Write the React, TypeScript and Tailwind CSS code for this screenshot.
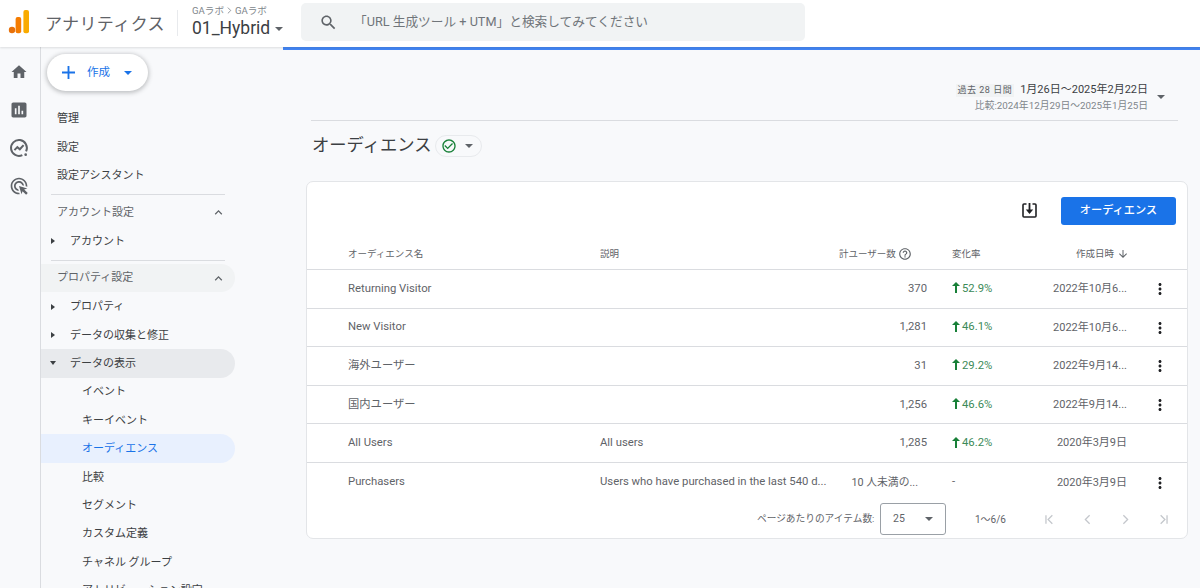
import React from 'react';

const font = "font-['Roboto','Noto_Sans_CJK_JP',sans-serif]";

const Caret = ({ className = '' }: { className?: string }) => (
  <svg viewBox="0 0 10 5" className={`w-[8px] h-[4px] fill-current ${className}`}>
    <path d="M0 0l5 5 5-5z" />
  </svg>
);

const Icon = ({ d, className = '' }: { d: string; className?: string }) => (
  <svg viewBox="0 0 24 24" className={`fill-current ${className}`}>
    <path d={d} />
  </svg>
);

const Line = ({ d }: { d: string }) => (
  <svg viewBox="0 0 24 24" className="w-[17px] h-[17px] fill-none stroke-current stroke-[1.8]">
    <path d={d} />
  </svg>
);

const icons = {
  home: 'M10 20v-6h4v6h5v-8h3L12 3 2 12h3v8z',
  chart: 'M19 3H5c-1.1 0-2 .9-2 2v14c0 1.1.9 2 2 2h14c1.1 0 2-.9 2-2V5c0-1.1-.9-2-2-2zM9 17H7v-7h2v7zm4 0h-2V7h2v10zm4 0h-2v-4h2v4z',
  click: 'M11.71,17.99C8.53,17.84,6,15.22,6,12c0-3.31,2.69-6,6-6c3.22,0,5.84,2.53,5.99,5.71l-2.1-0.63C15.48,9.31,13.89,8,12,8c-2.21,0-4,1.79-4,4c0,1.89,1.31,3.48,3.08,3.89L11.71,17.99z M22,12c0,0.3-0.01,0.6-0.04,0.9l-1.97-0.59C20,12.21,20,12.1,20,12c0-4.42-3.58-8-8-8s-8,3.58-8,8s3.58,8,8,8c0.1,0,0.21,0,0.31-0.01l0.59,1.97C12.6,21.99,12.3,22,12,22C6.48,22,2,17.52,2,12C2,6.48,6.48,2,12,2S22,6.48,22,12z M18.23,16.26L22,15l-10-3l3,10l1.26-3.77l4.27,4.27l1.98-1.98L18.23,16.26z',
  search: 'M15.5 14h-.79l-.28-.27C15.41 12.59 16 11.11 16 9.5 16 5.91 13.09 3 9.5 3S3 5.91 3 9.5 5.91 16 9.5 16c1.61 0 3.09-.59 4.23-1.57l.27.28v.79l5 4.99L20.49 19l-4.99-5zm-6 0C7.01 14 5 11.99 5 9.5S7.01 5 9.5 5 14 7.01 14 9.5 11.99 14 9.5 14z',
  more: 'M12 8c1.1 0 2-.9 2-2s-.9-2-2-2-2 .9-2 2 .9 2 2 2zm0 2c-1.1 0-2 .9-2 2s.9 2 2 2 2-.9 2-2-.9-2-2-2zm0 6c-1.1 0-2 .9-2 2s.9 2 2 2 2-.9 2-2-.9-2-2-2z',
  up: 'M7.41 15.41L12 10.83l4.59 4.58L18 14l-6-6-6 6z',
  help: 'M11 18h2v-2h-2v2zm1-16C6.48 2 2 6.48 2 12s4.48 10 10 10 10-4.48 10-10S17.52 2 12 2zm0 18c-4.41 0-8-3.59-8-8s3.59-8 8-8 8 3.59 8 8-3.59 8-8 8zm0-14c-2.21 0-4 1.79-4 4h2c0-1.1.9-2 2-2s2 .9 2 2c0 2-3 1.75-3 5h2c0-2.25 3-2.5 3-5 0-2.21-1.79-4-4-4z',
  down: 'M20 12l-1.41-1.41L13 16.17V4h-2v12.17l-5.58-5.59L4 12l8 8 8-8z',
  check: 'M16.59 7.58L10 14.17l-3.59-3.58L5 12l5 5 8-8zM12 2C6.48 2 2 6.48 2 12s4.48 10 10 10 10-4.48 10-10S17.52 2 12 2zm0 18c-4.42 0-8-3.58-8-8s3.58-8 8-8 8 3.58 8 8-3.58 8-8 8z',
};

const Header = () => (
  <header className="h-[47px] shrink-0 bg-white flex items-center shadow-[0_1px_2px_rgba(60,64,67,0.15)] relative z-10">
    <svg viewBox="0 0 30 34" className="w-[30px] h-[34px] mb-[13px]">
      <circle cx="12" cy="30" r="3.2" fill="#e8710a" />
      <rect x="15.6" y="17" width="5.6" height="16.2" rx="2" fill="#f57c00" />
      <rect x="23.4" y="10" width="5.6" height="23.2" rx="2" fill="#f9ab00" />
    </svg>
    <span className="ml-[15px] mt-[3px] text-[17px] tracking-[0.4px] text-[#5f6368] w-[119px] whitespace-nowrap">アナリティクス</span>
    <div className="ml-[13px] w-px h-[26px] mb-[2px] bg-[#e8eaed]" />
    <div className="ml-[14px] w-[109px] flex flex-col gap-[2px] mb-[4px]">
      <span className="text-[9.6px] leading-[11px] text-[#80868b] flex items-center">
        GAラボ
        <svg viewBox="0 0 6 8" className="w-[5px] h-[7px] mx-[3px] stroke-[#80868b] fill-none"><path d="M1 .5L4.5 4 1 7.5" /></svg>
        GAラボ
      </span>
      <span className="text-[17.5px] leading-[20px] text-[#3c4043] flex items-center whitespace-nowrap">
        01_Hybrid <Caret className="ml-[5px] text-[#5f6368] mt-[2px]" />
      </span>
    </div>
    <div className="w-[504px] h-[38px] mb-[3px] bg-[#f1f3f4] rounded-[5px] flex items-center text-[#5f6368]">
      <Icon d={icons.search} className="w-[19px] h-[19px] ml-[18px]" />
      <span className="ml-[16px] mb-[1px] text-[12.7px] text-[#70757a] whitespace-nowrap">「URL 生成ツール + UTM」と検索してみてください</span>
    </div>
  </header>
);

const Rail = () => (
  <div className="w-[41px] shrink-0 border-r border-r-[#dadce0] flex flex-col items-center pt-[15px] pr-[3px] gap-[18px] text-[#5f6368]">
    <Icon d={icons.home} className="w-[18px] h-[20px]" />
    <Icon d={icons.chart} className="w-[20px] h-[20px]" />
    <svg viewBox="0 0 24 24" className="w-[20px] h-[20px] fill-none stroke-current stroke-[2.4]">
      <path d="M20.5 16A9.5 9.5 0 1 0 16 20.5" />
      <path d="M6.5 14.5l3.5-3.5 3 2.5 4.5-5" />
      <circle cx="20" cy="20" r="1.6" className="fill-current stroke-none" />
    </svg>
    <Icon d={icons.click} className="w-[20px] h-[20px]" />
  </div>
);

const NavRow = ({ label, arrow, indent = false, className = '' }: {
  label: string;
  arrow?: 'right' | 'down';
  indent?: boolean;
  className?: string;
}) => (
  <div className={`h-[28.4px] w-[194px] shrink-0 rounded-r-full flex items-center text-[11px] text-[#3c4043] whitespace-nowrap ${className}`}>
    {arrow === 'right' && (
      <svg viewBox="0 0 4 6" className="ml-[10px] w-[4px] h-[6px] fill-[#3c4043]"><path d="M0 0l4 3-4 3z" /></svg>
    )}
    {arrow === 'down' && (
      <svg viewBox="0 0 6 4" className="ml-[9px] w-[6px] h-[4px] fill-[#3c4043]"><path d="M0 0h6L3 4z" /></svg>
    )}
    <span className={`pt-[2px] ${arrow === 'right' ? 'ml-[15px]' : arrow === 'down' ? 'ml-[14px]' : indent ? 'ml-[41px]' : 'ml-[16px]'}`}>{label}</span>
  </div>
);

const Section = ({ label, className = '' }: { label: string; className?: string }) => (
  <div className={`h-[28.4px] w-[194px] shrink-0 rounded-r-full flex items-center justify-between text-[11px] text-[#5f6368] whitespace-nowrap ${className}`}>
    <span className="ml-[16px] pt-[1px]">{label}</span>
    <Icon d={icons.up} className="w-[15px] h-[15px] mr-[9px]" />
  </div>
);

const Divider = ({ className = '' }: { className?: string }) => (
  <div className={`h-px w-[174px] ml-[10px] bg-[#dadce0] shrink-0 ${className}`} />
);

const Nav = () => (
  <nav className="w-[242px] shrink-0 flex flex-col pt-[7px]">
    <button className="ml-[6px] w-[101px] h-[37px] shrink-0 bg-white rounded-full shadow-[0_1px_4px_1px_rgba(60,64,67,0.3)] flex items-center text-[#1a73e8]">
      <svg viewBox="0 0 14 14" className="ml-[15px] w-[13px] h-[13px] stroke-[#1a73e8] stroke-2"><path d="M7 0v14M0 7h14" /></svg>
      <span className="ml-[12px] text-[11.5px]">作成</span>
      <Caret className="ml-[14px]" />
    </button>
    <div className="h-[13.5px] shrink-0" />
    <NavRow label="管理" />
    <NavRow label="設定" />
    <NavRow label="設定アシスタント" />
    <Divider className="mt-[4px] mb-[4px]" />
    <Section label="アカウント設定" />
    <NavRow label="アカウント" arrow="right" />
    <Divider className="mt-[4.5px] mb-[3px]" />
    <Section label="プロパティ設定" className="bg-[#f1f3f4]" />
    <NavRow label="プロパティ" arrow="right" />
    <NavRow label="データの収集と修正" arrow="right" />
    <NavRow label="データの表示" arrow="down" className="bg-[#e8eaed]" />
    <NavRow label="イベント" indent />
    <NavRow label="キーイベント" indent />
    <NavRow label="オーディエンス" indent className="bg-[#e8f0fe] !text-[#1a73e8]" />
    <NavRow label="比較" indent />
    <NavRow label="セグメント" indent />
    <NavRow label="カスタム定義" indent />
    <NavRow label="チャネル グループ" indent />
    <NavRow label="アトリビューション設定" indent />
  </nav>
);

const rows = [
  { name: 'Returning Visitor', desc: '', users: '370', rate: '52.9%', date: '2022年10月6...', menu: true },
  { name: 'New Visitor', desc: '', users: '1,281', rate: '46.1%', date: '2022年10月6...', menu: true },
  { name: '海外ユーザー', desc: '', users: '31', rate: '29.2%', date: '2022年9月14...', menu: true },
  { name: '国内ユーザー', desc: '', users: '1,256', rate: '46.6%', date: '2022年9月14...', menu: true },
  { name: 'All Users', desc: 'All users', users: '1,285', rate: '46.2%', date: '2020年3月9日', menu: false },
  { name: 'Purchasers', desc: 'Users who have purchased in the last 540 d...', users: '10 人未満の...', rate: '', date: '2020年3月9日', menu: true },
];

const grid = 'grid grid-cols-[293px_239px_88px_25px_80px_95px_1fr] items-center';

const Table = () => (
  <div className="text-[#5f6368]">
    <div className={`${grid} h-[31px] border-b border-b-[#dadce0] text-[9.5px]`}>
      <span className="pl-[41px]">オーディエンス名</span>
      <span>説明</span>
      <span className="col-span-2 flex items-center">
        計ユーザー数
        <Icon d={icons.help} className="w-[14px] h-[14px] ml-[2px]" />
      </span>
      <span>変化率</span>
      <span className="flex items-center justify-end col-span-2 pr-[58px]">
        作成日時
        <Icon d={icons.down} className="w-[12px] h-[12px] ml-[3px]" />
      </span>
    </div>
    {rows.map((r) => (
      <div key={r.name} className={`${grid} h-[38.6px] pt-[1px] border-b border-b-[#dadce0] last:border-b-0 text-[11.3px] whitespace-nowrap`}>
        <span className="pl-[41px]">{r.name}</span>
        <span>{r.desc}</span>
        {r.rate ? (
          <span className="text-right">{r.users}</span>
        ) : (
          <span className="text-right pr-[9px] text-[10.8px]">{r.users}</span>
        )}
        <span />
        {r.rate ? (
          <span className="flex items-center text-[#3c8a58]">
            <svg viewBox="0 0 8 11" className="w-[8px] h-[11px] mr-[2px] mt-[-3px] fill-[#188038]"><path d="M4 0l4 4H5v7H3V4H0z" /></svg>
            {r.rate}
          </span>
        ) : (
          <span>-</span>
        )}
        <span className="text-right text-[11px]">{r.date}</span>
        <span className="flex justify-center pl-[6px]">
          {r.menu && <Icon d={icons.more} className="w-[18px] h-[18px] text-[#202124]" />}
        </span>
      </div>
    ))}
  </div>
);

const Main = () => (
  <main className="flex-1 min-w-0 flex flex-col">
    <div className="h-[3px] bg-[#4285f4] shrink-0" />
    <div className="h-[71px] ml-[28px] mr-[22px] border-b border-b-[#dadce0] shrink-0 flex justify-end pt-[32px]">
      <div className="flex flex-col items-end">
        <div className="flex items-center h-[16px]">
          <span className="text-[9px] tracking-[0.5px] bg-[#f1f3f4] text-[#5f6368] h-[13px] leading-[13px] px-[2px]">過去 28 日間</span>
          <span className="text-[11px] text-[#3c4043] ml-[6px]">1月26日～2025年2月22日</span>
        </div>
        <span className="text-[9.8px] text-[#80868b] mt-[1px] leading-[14px]">比較:2024年12月29日～2025年1月25日</span>
      </div>
      <Caret className="ml-[9px] mr-[13px] mt-[13px] text-[#5f6368]" />
    </div>
    <div className="h-[60px] ml-[29px] flex items-center shrink-0 pb-[15px] pt-[5px]">
      <h1 className="text-[17.3px] font-normal text-[#3c4043] whitespace-nowrap">オーディエンス</h1>
      <div className="ml-[4px] w-[47px] h-[22px] rounded-full border border-[#e8eaed] flex items-center">
        <Icon d={icons.check} className="w-[16px] h-[16px] ml-[5px] text-[#188038]" />
        <Caret className="ml-[8px] text-[#5f6368]" />
      </div>
    </div>
    <section className="ml-[23px] mr-[12px] h-[358px] bg-white rounded-[7px] border border-[#e3e5e8] shrink-0">
      <div className="h-[57px] flex items-center justify-end">
        <svg viewBox="0 0 15 15" className="w-[15px] h-[15px]">
          <path d="M4.5 1H2a1 1 0 0 0-1 1v11a1 1 0 0 0 1 1h11a1 1 0 0 0 1-1V2a1 1 0 0 0-1-1h-2.5" className="fill-none stroke-[#202124] stroke-[1.6]" />
          <path d="M6.6 0h1.8v6.5h2.8L7.5 11 3.8 6.5h2.8z" className="fill-[#202124]" />
        </svg>
        <button className="ml-[24px] mr-[11px] w-[115px] h-[28px] pt-[1px] bg-[#1a73e8] rounded-[3px] text-white text-[11.2px] font-medium">オーディエンス</button>
      </div>
      <Table />
      <div className="h-[33px] mt-[1px] flex items-center text-[#5f6368] text-[9.7px]">
        <span className="ml-[450px] whitespace-nowrap w-[123px]">ページあたりのアイテム数:</span>
        <div className="w-[66px] h-[32px] border border-[#9aa0a6] rounded-[3px] flex items-center justify-between px-[12px] text-[10.5px]">
          25
          <Caret />
        </div>
        <span className="ml-[29px] w-[66px] text-[10px]">1～6/6</span>
        <div className="flex items-center gap-[21px] text-[#c4c7cc]">
          <Line d="M16 6l-6 6 6 6M7 6v12" />
          <Line d="M15 6l-6 6 6 6" />
          <Line d="M9 6l6 6-6 6" />
          <Line d="M8 6l6 6-6 6M17 6v12" />
        </div>
      </div>
    </section>
  </main>
);

export default function App() {
  return (
    <div className={`h-[588px] w-[1200px] overflow-hidden bg-[#f8f9fb] flex flex-col ${font}`}>
      <Header />
      <div className="flex flex-1 min-h-0">
        <Rail />
        <Nav />
        <Main />
      </div>
    </div>
  );
}
